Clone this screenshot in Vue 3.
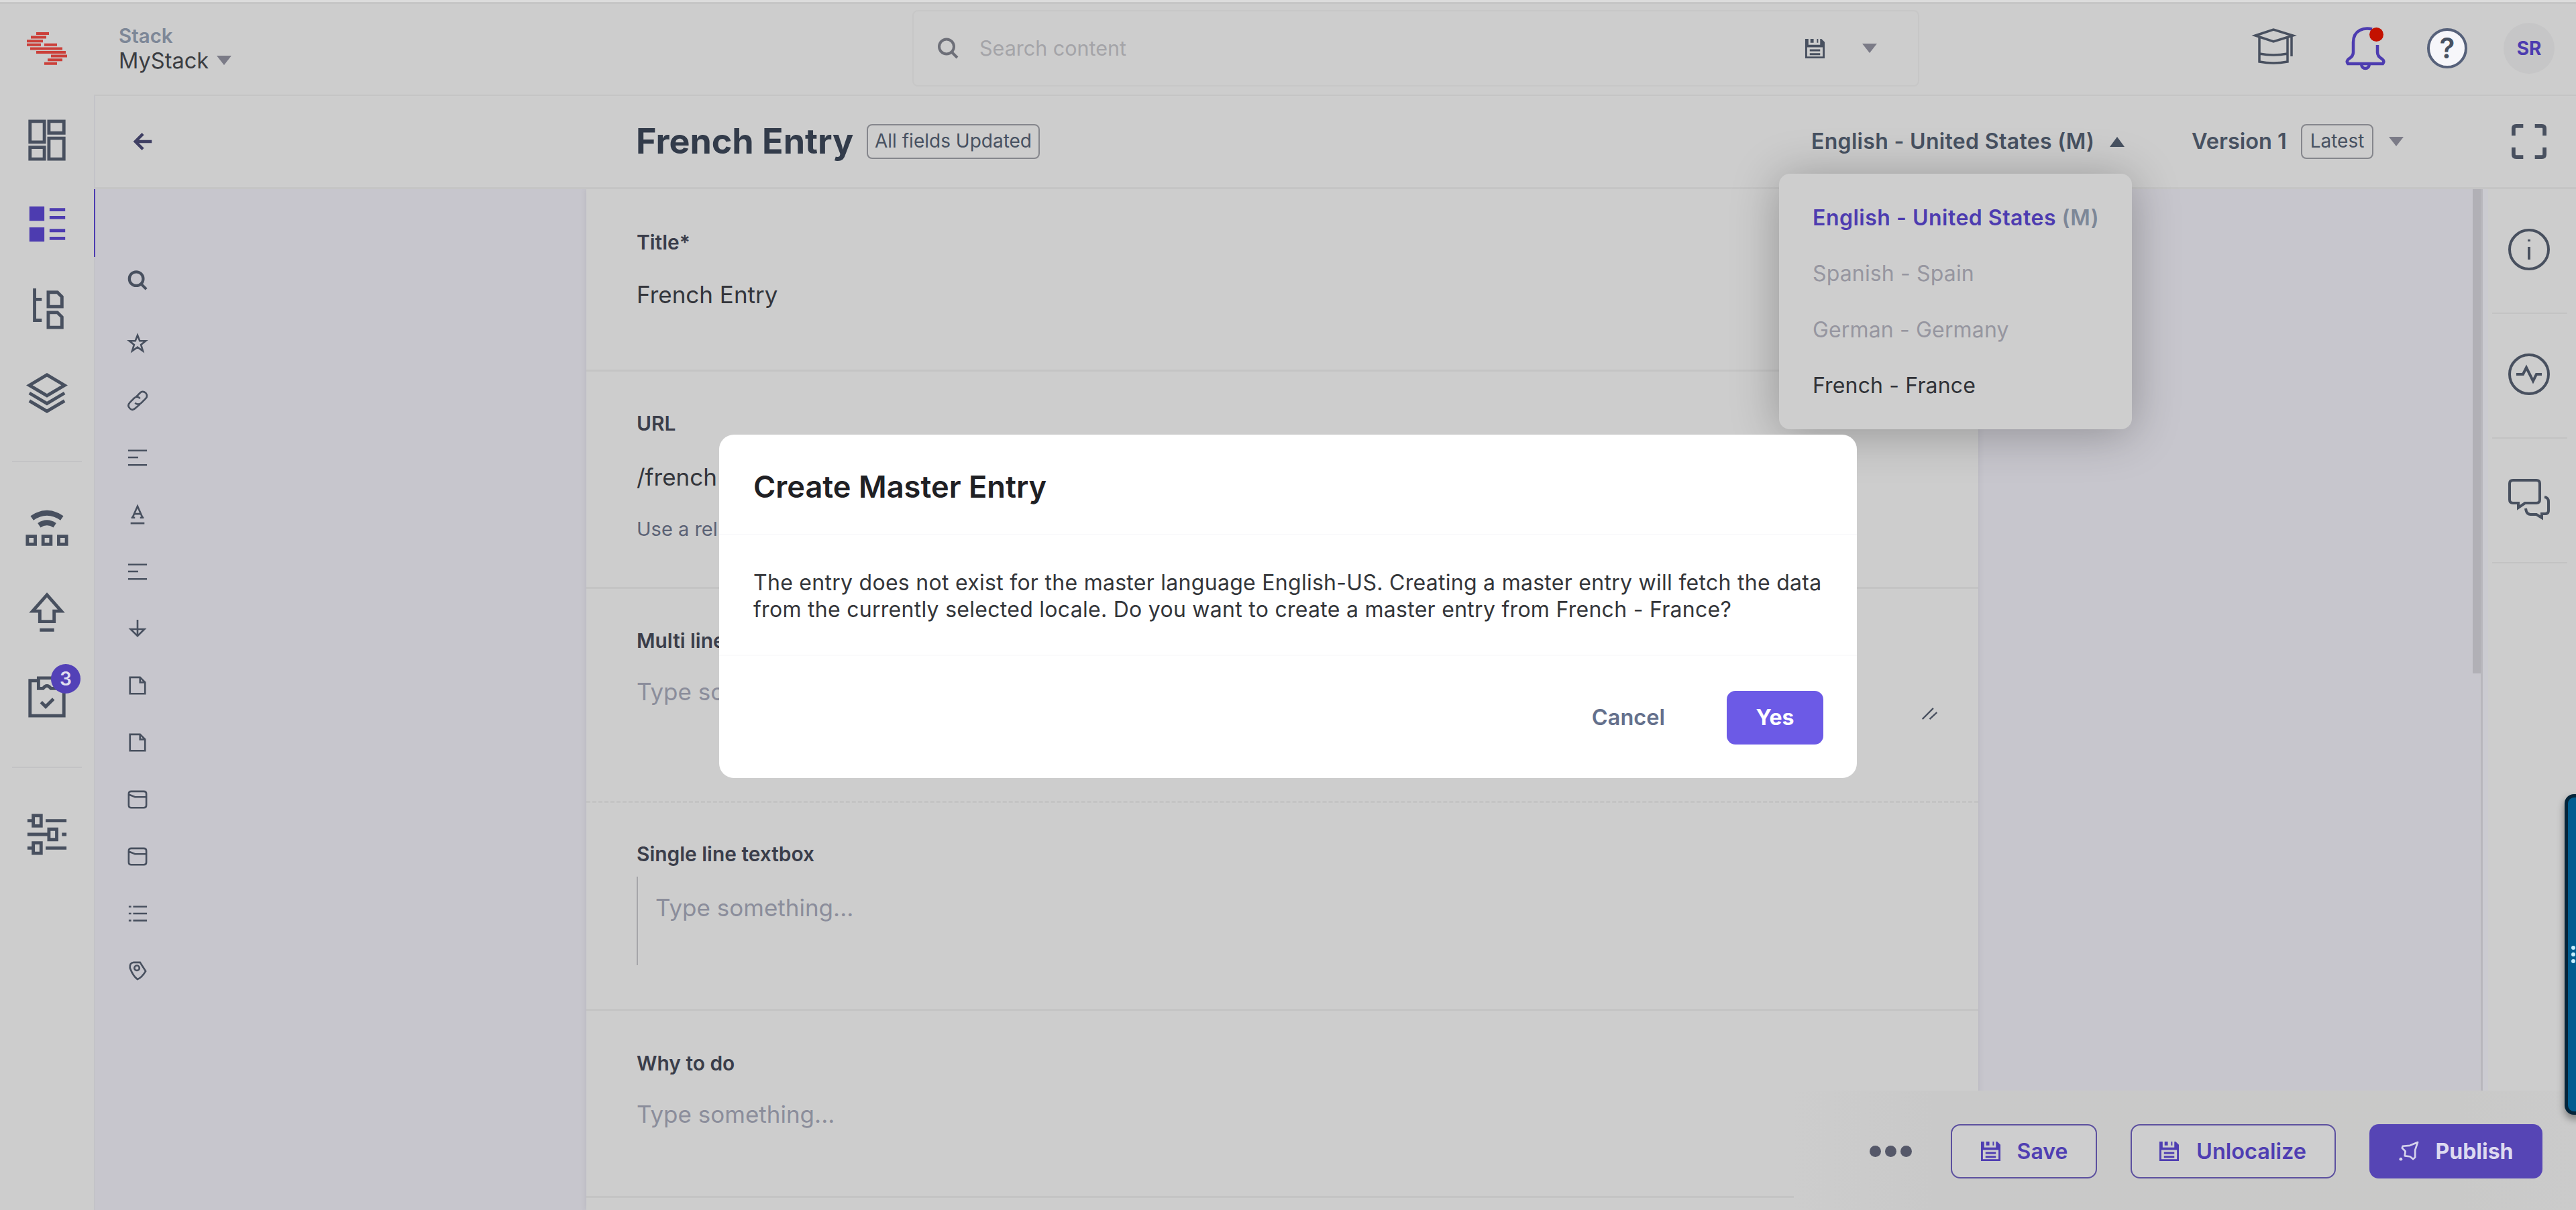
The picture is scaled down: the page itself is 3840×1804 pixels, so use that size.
<template>
  <div class="app">
    <header class="topbar">
      <svg class="logo" viewBox="0 0 62 51" aria-hidden="true">
        <path :d="icons.logo" />
      </svg>
      <div class="stack">
        <span class="stack-label">Stack</span>
        <span class="stack-name">MyStack <i class="caret"></i></span>
      </div>
      <div class="search">
        <svg class="icon search-icon" viewBox="0 0 32 32"><path :d="icons.search" /></svg>
        <span class="search-text">Search content</span>
        <svg class="icon save-icon" viewBox="0 0 32 32"><path class="solid" :d="icons.save" /></svg>
        <i class="caret"></i>
      </div>
      <div class="top-actions">
        <svg class="icon cap" viewBox="0 0 60 54"><path :d="icons.cap" /></svg>
        <div class="bell">
          <svg class="icon" viewBox="0 0 60 64"><path :d="icons.bell" /></svg>
          <i class="dot"></i>
        </div>
        <div class="help">?</div>
        <div class="avatar">SR</div>
      </div>
    </header>

    <nav class="sidenav">
      <div
        v-for="item in nav"
        :key="item.name"
        :class="['nav-item', item.name, { active: item.active }]"
      >
        <svg class="icon" viewBox="0 0 68 68">
          <path :d="icons[item.name]" />
          <path v-if="item.active" class="solid" :d="icons.entriesFill" />
          <path v-if="item.name === 'releases'" class="arcs" :d="icons.arcs" />
        </svg>
        <span v-if="item.badge" class="badge">{{ item.badge }}</span>
      </div>
    </nav>

    <main class="content">
      <div class="page-header">
        <svg class="icon back" viewBox="0 0 32 32"><path d="M30 16H3M15 3L2 16L15 29" /></svg>
        <h1>French Entry</h1>
        <span class="tag tag-fields">All fields Updated</span>
        <div class="locale">
          English - United States (M) <i class="caret up"></i>
          <ul class="locale-menu">
            <li class="selected">English - United States <span>(M)</span></li>
            <li class="disabled">Spanish - Spain</li>
            <li class="disabled">German - Germany</li>
            <li>French - France</li>
          </ul>
        </div>
        <span class="version">Version 1</span>
        <span class="tag tag-latest">Latest</span>
        <i class="caret version-caret"></i>
        <svg class="icon fullscreen" viewBox="0 0 54 54"><path :d="icons.fullscreen" /></svg>
      </div>

      <div class="workspace">
        <div class="outline">
          <svg v-for="(name, i) in outline" :key="i" :class="['icon', name]" viewBox="0 0 32 32">
            <path :d="icons[name]" />
          </svg>
        </div>

        <section class="form">
          <div v-for="field in fields" :key="field.label" :class="['field', field.type]">
            <label>{{ field.label }}</label>
            <div :class="['value', { placeholder: !field.value }]">
              {{ field.value || 'Type something...' }}
            </div>
            <p v-if="field.help">{{ field.help }}</p>
            <svg v-if="field.type === 'multi'" class="icon grip" viewBox="0 0 26 20">
              <path d="M1 19L19 1M13 19L25 8" />
            </svg>
          </div>
        </section>

        <div class="canvas-rest"><i class="scrollbar"></i></div>

        <aside class="rightbar">
          <div v-for="name in ['info', 'activity', 'comments']" :key="name" class="side-item">
            <svg class="icon" viewBox="0 0 64 64"><path :d="icons[name]" /></svg>
          </div>
        </aside>
      </div>
    </main>

    <footer class="actions">
      <div class="more"><i></i><i></i><i></i></div>
      <button class="outlined save">
        <svg class="icon" viewBox="0 0 32 32"><path class="solid" :d="icons.save" /></svg>
        Save
      </button>
      <button class="outlined unlocalize">
        <svg class="icon" viewBox="0 0 32 32"><path class="solid" :d="icons.save" /></svg>
        Unlocalize
      </button>
      <button class="publish">
        <svg class="icon" viewBox="0 0 32 32">
          <path :d="icons.rocket" />
          <circle cx="4" cy="28" r="2.5" />
        </svg>
        Publish
      </button>
    </footer>

    <div class="feedback"><i></i><i></i><i></i></div>

    <div class="modal" role="dialog">
      <h2>Create Master Entry</h2>
      <div class="modal-body">
        The entry does not exist for the master language English-US. Creating a master entry will fetch the data<br />
        from the currently selected locale. Do you want to create a master entry from French - France?
      </div>
      <div class="modal-footer">
        <button class="cancel">Cancel</button>
        <button class="yes">Yes</button>
      </div>
    </div>
  </div>
</template>

<script setup>
const nav = [
  { name: 'dashboard' },
  { name: 'entries', active: true },
  { name: 'models' },
  { name: 'layers' },
  { name: 'releases' },
  { name: 'upload' },
  { name: 'tasks', badge: 3 },
  { name: 'settings' }
]

const outline = [
  'search', 'star', 'link', 'lines', 'text', 'lines', 'down',
  'file', 'file', 'folder', 'folder', 'list', 'label'
]

const fields = [
  { label: 'Title*', value: 'French Entry', type: 'title' },
  { label: 'URL', value: '/french', type: 'url', help: 'Use a rel' },
  { label: 'Multi line', type: 'multi' },
  { label: 'Single line textbox', type: 'single' },
  { label: 'Why to do', type: 'why' }
]

const icons = {
  logo: 'M15 3H34M7 8.6H30M1 14.2H25M1 19.8H22M27 19.8H46M6 25.4H54M15 31H59M37 36.6H61M32 42.2H54M27 47.8H46',
  search: 'M25 13.5A11 11 0 1 1 3 13.5A11 11 0 1 1 25 13.5M22 22L30 30',
  save: 'M1 1H6V10H24V1H26L31 6V31H1ZM4 14V28H28V14ZM8 17H24V20H8ZM8 23H24V26H8ZM9 1H14V7H9ZM19 1H21V7H19Z',
  cap: 'M2 11L29 2L58 11L29 20ZM8 14V50Q29 54 50 50V14M8 38Q29 42 50 38M56 12V42',
  bell: 'M40 3.5Q30 1 22 5Q12 10 12 23V38Q12 44 5 48Q1 51 4 55H56Q59 51 55 48Q48 44 48 38V27M24 56Q25 62 30 62Q35 62 36 56',
  dashboard: 'M8 6H30V38H8ZM37 6H60V24H37ZM8 46H30V64H8ZM37 32H60V64H37Z',
  entries: 'M38 11H62M38 23H62M38 43H62M38 55H62',
  entriesFill: 'M7 6H30V28H7ZM7 38H30V60H7Z',
  models: 'M15 2V51H26M15 19H26M36 8H50L57 15V30H36ZM36 39H50L57 46V62H36Z',
  layers: 'M34 5L61 21L34 37L7 21ZM7 33L34 49L61 33M7 45L34 61L61 45',
  releases: 'M4 45H16V57H4ZM28 45H40V57H28ZM52 45H64V57H52Z',
  arcs: 'M11 17Q34 1 57 17M22 28Q34 20 46 28',
  upload: 'M34 5L56 30H45V46H23V30H12ZM23 59H45',
  tasks: 'M21 8H8V62H60V8H47M21 4H47V20H40Q34 12 28 20H21ZM25 41L32 48L44 36',
  settings: 'M4 13H12M13 5H25V21H13ZM32 13H64M4 34H36M37 26H49V42H37ZM57 34H64M4 55H12M13 47H25V63H13ZM32 55H64',
  fullscreen: 'M3 18V7Q3 3 7 3H18M36 3H47Q51 3 51 7V18M51 36V47Q51 51 47 51H36M18 51H7Q3 51 3 47V36',
  info: 'M61 32A29 29 0 1 1 3 32A29 29 0 1 1 61 32M32 28V47M32 17V20',
  activity: 'M61 32A29 29 0 1 1 3 32A29 29 0 1 1 61 32M13 32H23L28 22L38 42L43 32H51',
  comments: 'M8 4H43Q48 4 48 9V33Q48 38 43 38H26L16 45V38H8Q3 38 3 33V9Q3 4 8 4M55 29Q61 30 61 36V49Q61 54 56 54H51V60L43 55H34Q28 55 27 46',
  star: 'M16 3L19.5 12H29L21.5 18L24.5 28L16 22L7.5 28L10.5 18L3 12H12.5Z',
  link: 'M13 11L20 4Q24 0 29 4Q33 9 29 13L22 20Q17 24 12 20M20 22L13 28Q8 33 4 29Q-1 24 4 19L11 12Q16 8 20 13',
  lines: 'M1 5H31M1 16H17M1 28H31',
  text: 'M6 21H12M20 21H26M8 21L16 3L24 21M11 15H21M5 30H27',
  down: 'M16 2V28M5 17H27L16 28Z',
  file: 'M4 3H20L28 11V29H4ZM20 3V11H28',
  folder: 'M2 7Q2 3 6 3H26Q30 3 30 7V25Q30 29 26 29H6Q2 29 2 25ZM2 8L12 12H30',
  list: 'M2 5H6M9 5H31M2 16H6M9 16H31M2 27H6M9 27H31',
  label: 'M4 12Q3 4 10 3H20L29 17Q23 27 16 30Q9 25 4 12M19 12A4 4 0 1 1 11 12A4 4 0 1 1 19 12',
  rocket: 'M30 2L18 7L7 8L6 11L11 16L10 23L18 24L23 28L26 25L26 14Z'
}
</script>

<style>
body {
  margin: 0;
  background: #cdcdcd;
}
</style>

<style scoped>
.app {
  position: relative;
  display: grid;
  grid-template: 141px 1663px / 140px 3700px;
  width: 3840px;
  height: 1804px;
  overflow: hidden;
  background: #cdcdcd;
  color: #475161;
  font-family: Inter, "Liberation Sans", sans-serif;
}

* {
  box-sizing: border-box;
}

button {
  display: flex;
  align-items: center;
  justify-content: center;
  padding: 0;
  border: 0;
  background: none;
  font: 600 32px/40px Inter, sans-serif;
}

.icon {
  display: block;
  flex: none;
  overflow: visible;
  fill: none;
  stroke: #48505f;
  stroke-width: 4;
}

.icon .solid {
  fill: #48505f;
  fill-rule: evenodd;
  stroke: none;
}

.caret {
  display: block;
  flex: none;
  border: 11px solid transparent;
  border-top: 14px solid #7b7b87;
  border-bottom: 0;
}

.caret.up {
  border-top: 0;
  border-bottom: 15px solid #475161;
}

/* Top bar */
.topbar {
  grid-column: 1 / 3;
  display: flex;
  align-items: center;
  border-top: 3px solid #dcdcdc;
  box-shadow: inset 0 3px #c6c6c6;
}

.logo {
  width: 62px;
  height: 51px;
  margin-left: 39px;
  stroke: #cb3f39;
  stroke-width: 4;
}

.stack {
  width: 1187px;
  margin-left: 76px;
}

.stack span {
  display: flex;
  align-items: center;
}

.stack-label {
  font-size: 29.5px;
  line-height: 36px;
  font-weight: 600;
  color: #7d8797;
}

.stack-name {
  gap: 12px;
  font-size: 32.5px;
  line-height: 39px;
  color: #3b3d42;
}

.search {
  display: flex;
  align-items: center;
  width: 1501px;
  height: 114px;
  margin-left: -4px;
  padding-left: 35px;
  border: 2px solid #c7c7c7;
  border-radius: 8px;
}

.search-icon {
  width: 32px;
  height: 32px;
  stroke: #6d6f78;
}

.search-text {
  width: 1230px;
  margin-left: 31px;
  font-size: 30.5px;
  line-height: 40px;
  color: #a4a4a8;
}

.save-icon {
  width: 31px;
  height: 31px;
}

.search .caret {
  margin-left: 55px;
}

.top-actions {
  display: flex;
  align-items: center;
  margin-left: 499px;
}

.cap {
  width: 60px;
  height: 54px;
  margin-top: -6px;
  stroke-width: 3.5;
}

.bell {
  position: relative;
  width: 60px;
  height: 64px;
  margin-left: 76px;
}

.bell .icon {
  stroke: #4d3cb0;
  stroke-width: 4.5;
}

.bell .dot {
  position: absolute;
  top: 1px;
  right: 3px;
  width: 21px;
  height: 21px;
  border-radius: 50%;
  background: #c31100;
}

.help {
  width: 60px;
  height: 60px;
  margin-left: 62px;
  border: 4px solid #56617a;
  border-radius: 50%;
  background: #f6f6fa;
  text-align: center;
  font-size: 42px;
  line-height: 52px;
  font-weight: 600;
}

.avatar {
  width: 76px;
  height: 76px;
  margin-left: 54px;
  border-radius: 50%;
  background: #c6c6c7;
  color: #4d3cb0;
  text-align: center;
  font-size: 28px;
  line-height: 76px;
  font-weight: 700;
}

/* Left navigation */
.sidenav {
  display: flex;
  flex-direction: column;
  align-items: center;
  padding-top: 30px;
}

.nav-item {
  position: relative;
  display: flex;
  align-items: center;
  justify-content: center;
  width: 104px;
  height: 74px;
  margin-bottom: 52.5px;
}

.nav-item .icon {
  width: 66px;
  height: 66px;
  stroke-width: 5;
}

.nav-item .arcs {
  stroke-width: 8;
}

.nav-item.active .icon {
  stroke: #4d3cb0;
}

.nav-item.active .solid {
  fill: #4d3cb0;
}

.nav-item.layers {
  height: 138px;
  margin-bottom: 63px;
  padding-bottom: 64px;
  border-bottom: 2px solid #c3c3c5;
}

.nav-item.tasks {
  height: 140px;
  margin-bottom: 62px;
  padding-bottom: 68px;
  border-bottom: 2px solid #c3c3c5;
}

.badge {
  position: absolute;
  top: -15px;
  right: 2px;
  width: 44px;
  height: 44px;
  border-radius: 50%;
  background: #5341b7;
  color: #e2e0f0;
  text-align: center;
  font-size: 28px;
  line-height: 44px;
  font-weight: 600;
}

/* Entry header */
.content {
  display: flex;
  flex-direction: column;
  border-top: 2px solid #c4c4c4;
  border-left: 2px solid #c3c3c8;
}

.page-header {
  position: relative;
  z-index: 2;
  display: flex;
  flex: none;
  align-items: center;
  height: 139px;
  border-bottom: 3px solid #c5c5c5;
  background: #cdcdcd;
}

.back {
  width: 32px;
  height: 28px;
  margin-left: 56px;
  stroke: #3f3f63;
  stroke-width: 5;
}

h1 {
  width: 344px;
  margin: 0 0 0 718px;
  font-size: 52px;
  line-height: 64px;
  font-weight: 700;
  white-space: nowrap;
  color: #323b4a;
}

.tag {
  height: 52px;
  border: 2px solid #85868c;
  border-radius: 8px;
  text-align: center;
  font-size: 28px;
  line-height: 46px;
  white-space: nowrap;
}

.tag-fields {
  width: 258px;
}

.locale {
  position: relative;
  display: flex;
  align-items: center;
  justify-content: space-between;
  width: 467px;
  margin-left: 1150px;
  font-size: 32px;
  line-height: 40px;
  font-weight: 600;
  letter-spacing: 0.32px;
  white-space: nowrap;
}

.locale-menu {
  position: absolute;
  top: 68px;
  left: -48px;
  width: 526px;
  height: 381px;
  margin: 0;
  padding: 24px 50px;
  border-radius: 16px;
  background: #cecece;
  box-shadow: 0 6px 70px rgba(0, 0, 0, 0.28);
  color: #303237;
  list-style: none;
  font-size: 32px;
  line-height: 83.4px;
  font-weight: 400;
  letter-spacing: 0.15px;
}

.locale-menu .selected {
  color: #4d3cb0;
  font-weight: 600;
  letter-spacing: 0.5px;
}

.locale-menu .selected span {
  color: #7d8797;
}

.locale-menu .disabled {
  color: #9696a0;
}

.version {
  width: 163px;
  margin-left: 100px;
  font-size: 32.5px;
  line-height: 40px;
  font-weight: 600;
  white-space: nowrap;
}

.tag-latest {
  width: 108px;
}

.version-caret {
  margin-left: 23px;
}

.fullscreen {
  width: 52px;
  height: 52px;
  margin-left: 161px;
  stroke-width: 6;
}

/* Workspace */
.workspace {
  display: grid;
  flex: 1;
  grid-template-columns: 732px 2075px 749px 142px;
  background: #c7c6cd;
}

.outline {
  display: flex;
  flex-direction: column;
  gap: 55px;
  margin-left: -2px;
  padding: 121px 0 0 48px;
  border-left: 2px solid transparent;
  border-image: linear-gradient(#4d3cb0 102px, transparent 102px) 1;
}

.outline .icon {
  width: 30px;
  height: 30px;
  stroke-width: 2.8;
}

.outline .search {
  width: 30px;
  height: 30px;
  padding: 0;
  margin: 0 0 9px;
  border: 0;
  stroke-width: 4.5;
}

.form {
  z-index: 0;
  background: #cdcdcd;
  box-shadow: 0 0 8px rgba(80, 80, 100, 0.15);
}

.field {
  position: relative;
  height: 272px;
  padding: 59px 75px 0;
  border-bottom: 3px solid #c4c4c4;
}

.field.url {
  height: 324px;
  padding-top: 57px;
}

.field.multi {
  height: 319px;
  padding-top: 57px;
  border-bottom-style: dashed;
}

.field.single {
  height: 310px;
  padding-top: 56px;
}

.field.why {
  height: 279px;
  padding-top: 58px;
}

label {
  display: block;
  font-size: 29.9px;
  line-height: 40px;
  font-weight: 600;
  color: #3a3d4a;
}

.value {
  margin-top: 33px;
  font-size: 35px;
  line-height: 50px;
  color: #33353b;
}

.url .value {
  margin-top: 35px;
}

.multi .value,
.why .value {
  margin-top: 31px;
}

.value.placeholder {
  color: #8b8d9b;
}

.single .value {
  height: 132px;
  margin-top: 14px;
  padding: 21px 0 0 26px;
  border-left: 2px solid #a5a5a9;
}

.field p {
  margin: 33px 0 0;
  font-size: 29px;
  line-height: 40px;
  color: #5b6275;
}

.grip {
  position: absolute;
  right: 60px;
  bottom: 121px;
  width: 25px;
  height: 18px;
  stroke-width: 2.5;
}

.canvas-rest {
  display: flex;
  justify-content: flex-end;
}

.scrollbar {
  width: 12px;
  height: 722px;
  background: #b1b0b6;
}

.rightbar {
  display: flex;
  flex-direction: column;
  align-items: center;
  border-left: 3px solid #b8b7bd;
  background: #cdcdcd;
  box-shadow: inset 8px 0 #cbcbd1;
}

.side-item {
  display: flex;
  align-items: center;
  justify-content: center;
  width: 112px;
  height: 186px;
  padding: 0 2px 4px 0;
  border-bottom: 2px solid #c3c3c3;
}

.side-item .icon {
  width: 64px;
  height: 64px;
}

/* Bottom actions */
.actions {
  position: absolute;
  right: 0;
  bottom: 0;
  display: flex;
  align-items: center;
  width: 1166px;
  height: 178px;
  padding: 3px 50px 0 113px;
  background: linear-gradient(90deg, #cdcdcd, #c9c9c9 18%, #c9c9c8 85%, #cbcbcb);
}

.more {
  display: flex;
  gap: 6px;
  margin-right: 58px;
}

.more i {
  width: 17px;
  height: 17px;
  border-radius: 50%;
  background: #555869;
}

.actions button {
  gap: 24px;
  height: 81px;
  margin-right: 50px;
  border-radius: 14px;
  color: #4f3eb2;
}

.actions .outlined {
  border: 2px solid #5c509f;
  background: #cececf;
}

.actions .save {
  width: 218px;
}

.actions .unlocalize {
  gap: 25px;
  width: 306px;
  padding-right: 2px;
  font-size: 32.5px;
}

.actions .publish {
  width: 258px;
  margin: 0;
  background: #5645b5;
  color: #dddaf0;
  font-weight: 700;
}

.actions .icon {
  width: 31px;
  height: 31px;
}

.actions .solid {
  fill: #4f3eb2;
}

.publish .icon {
  stroke: #d6d3ec;
  stroke-width: 2.8;
  stroke-linejoin: round;
}

.publish circle {
  fill: #d6d3ec;
  stroke: none;
}

/* Side tab on the window edge */
.feedback {
  position: absolute;
  top: 1184px;
  right: -8px;
  display: flex;
  flex-direction: column;
  align-items: center;
  justify-content: center;
  gap: 4px;
  width: 25px;
  height: 478px;
  border: 5px solid #04243a;
  border-radius: 14px 0 0 14px;
  background: #005d91;
  box-shadow: 0 6px 12px rgba(0, 0, 0, 0.4);
}

.feedback i {
  width: 6px;
  height: 6px;
  border-radius: 50%;
  background: #c5efff;
}

/* Dialog */
.modal {
  position: absolute;
  z-index: 3;
  top: 648px;
  left: 1072px;
  width: 1696px;
  height: 512px;
  border-radius: 22px;
  background: #fff;
}

h2 {
  height: 150px;
  margin: 0;
  padding: 48px 51px 0;
  border-bottom: 2px solid #fafafb;
  font-size: 45.2px;
  line-height: 60px;
  font-weight: 600;
  color: #1f2024;
}

.modal-body {
  height: 180px;
  padding: 51px 51px 0;
  border-bottom: 2px solid #fafafb;
  font-size: 32px;
  line-height: 40px;
  letter-spacing: 0.28px;
  white-space: nowrap;
  color: #34363a;
}

.modal-footer {
  display: flex;
  align-items: center;
  justify-content: flex-end;
  gap: 92px;
  padding: 52px 50px 0;
}

.cancel {
  font-size: 32.5px;
  color: #64708c;
}

.yes {
  width: 144px;
  height: 80px;
  border-radius: 13px;
  background: #6c5ae6;
  color: #fff;
  font-weight: 700;
}
</style>
